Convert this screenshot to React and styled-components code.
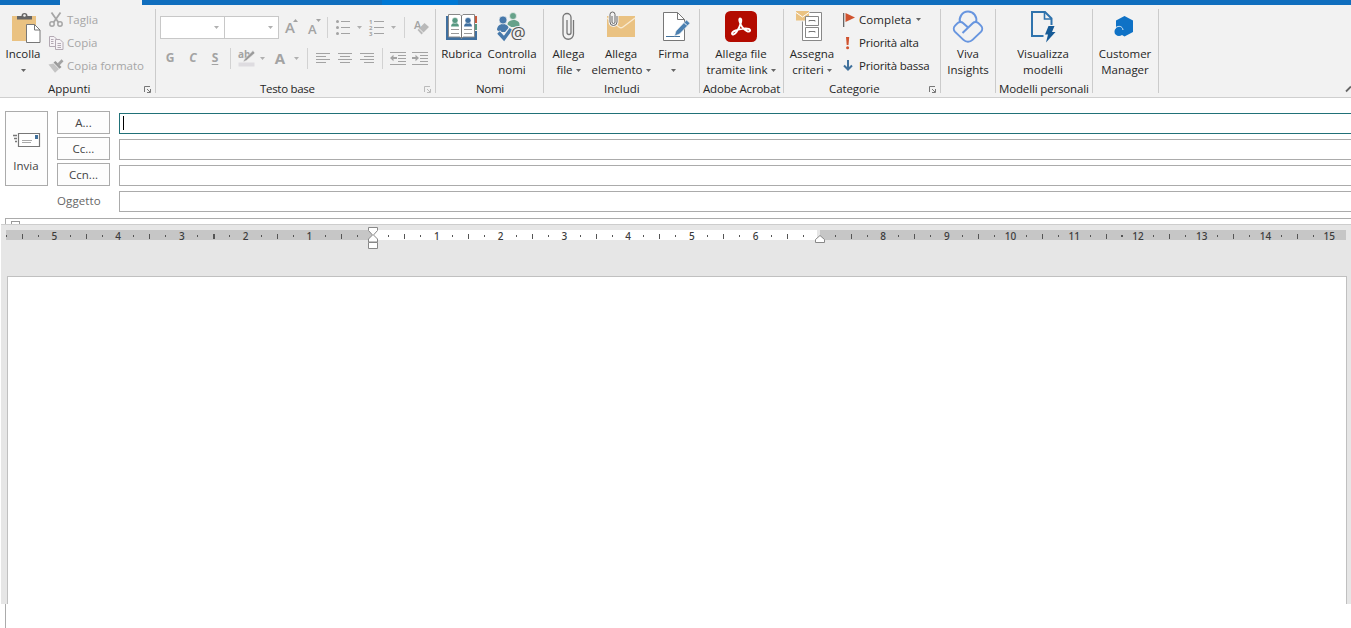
import React from 'react';
import styled, { createGlobalStyle } from "styled-components";

const GlobalStyle = createGlobalStyle`
  * { box-sizing: border-box; }
  body {
    margin: 0;
    background: #fff;
    overflow: hidden;
    font-family: "Open Sans", "Noto Sans", sans-serif;
    font-size: 11.5px;
    color: #262626;
  }
  svg { display: block; overflow: visible; flex: none; }
  button { font: inherit; color: inherit; padding: 0; }
`;

const Window = styled.div`
  width: 100%;
  height: 628px;
  display: flex;
  flex-direction: column;
  overflow: hidden;
`;
const TabStrip = styled.div`
  height: 5px;
  flex: none;
  display: flex;
  background: #106ebe;
`;
const ActiveTab = styled.div`
  width: 82px;
  margin-left: 60px;
  background: #f2f2f2;
`;
const StripAccent = styled.div`
  width: 76px;
  margin-left: 240px;
  background: #0078d4;
`;

const Ribbon = styled.div`
  height: 93px;
  flex: none;
  display: flex;
  background: #f2f2f2;
  border-bottom: 1px solid #cfcfcf;
`;
const Group = styled.section`
  width: ${(p) => p.$w}px;
  flex: none;
  display: flex;
  flex-direction: column;
  padding-top: 4px;
`;
const Separator = styled.div`
  width: 1px;
  height: 84px;
  margin-top: 4px;
  flex: none;
  background: #cbcbcb;
`;
const GroupBody = styled.div`
  height: 72px;
  display: flex;
  padding-left: ${(p) => p.$pad || 0}px;
`;
const GroupTitle = styled.div`
  height: 16px;
  line-height: 16px;
  display: flex;
  align-items: center;
  white-space: nowrap;
  padding: 0 4px 0 ${(p) => p.$pad}px;
  letter-spacing: ${(p) => p.$ls || 0}px;
  svg { margin-left: auto; }
`;
const Large = styled.button`
  width: ${(p) => p.$w}px;
  flex: none;
  border: none;
  background: none;
  display: flex;
  flex-direction: column;
  align-items: center;
  padding-top: 2px;
  svg.icon { margin-bottom: 3px; }
`;
const Line = styled.span`
  height: 16px;
  line-height: 16px;
  display: flex;
  align-items: center;
  justify-content: center;
  gap: 3px;
  white-space: nowrap;
`;
const SmallList = styled.div`
  display: flex;
  flex-direction: column;
  margin-top: -1px;
  padding-left: ${(p) => p.$pad}px;
  color: ${(p) => (p.$off ? "#a6a6a6" : "inherit")};
`;
const Small = styled.button`
  height: 23px;
  border: none;
  background: none;
  display: flex;
  align-items: center;
  gap: 4px;
  white-space: nowrap;
  letter-spacing: ${(p) => p.$ls || 0}px;
`;

const Tools = styled.div`
  display: flex;
  flex-direction: column;
  padding-top: 7px;
  color: #a3a3a3;
`;
const ToolRow = styled.div`
  display: flex;
  align-items: center;
  height: ${(p) => p.$h}px;
`;
const Tool = styled.div`
  width: ${(p) => p.$w}px;
  margin-left: ${(p) => p.$ml || 0}px;
  flex: none;
  display: flex;
  justify-content: center;
`;
const Letter = styled(Tool)`
  font-weight: 700;
  font-size: ${(p) => p.$size || 12}px;
  line-height: 16px;
  padding-bottom: 2px;
  font-style: ${(p) => (p.$italic ? "italic" : "normal")};
  text-decoration: ${(p) => (p.$under ? "underline" : "none")};
  text-underline-offset: 2px;
`;
const ToolSep = styled.div`
  width: 1px;
  height: 21px;
  margin-left: ${(p) => p.$ml}px;
  background: #d2d2d2;
`;
const Combo = styled.div`
  width: ${(p) => p.$w}px;
  height: 23px;
  margin-right: -1px;
  border: 1px solid #c8c8c8;
  background: #fff;
  display: flex;
  align-items: center;
  justify-content: flex-end;
  padding-right: 5px;
`;

const Header = styled.div`
  height: 120px;
  flex: none;
  display: flex;
  padding: 13px 0 0 5px;
  color: #444;
`;
const SendButton = styled.button`
  width: 43px;
  height: 75px;
  border: 1px solid #ababab;
  background: #fdfdfd;
  display: flex;
  flex-direction: column;
  align-items: center;
  padding: 21px 1px 0 0;
  gap: 11px;
`;
const Labels = styled.div`
  width: 53px;
  margin-left: 9px;
  display: flex;
  flex-direction: column;
  gap: 3px;
`;
const LabelButton = styled.button`
  height: 23px;
  border: 1px solid #ababab;
  background: #fdfdfd;
`;
const Subject = styled.span`
  line-height: 23px;
  color: #666;
  letter-spacing: 0.1px;
`;
const Fields = styled.div`
  flex: 1;
  margin-left: 9px;
  margin-right: -2px;
  padding-top: 2px;
  display: flex;
  flex-direction: column;
  gap: 5px;
`;
const Field = styled.div`
  height: 21px;
  border: 1px solid ${(p) => (p.$focus ? "#217178" : "#ababab")};
  background: #fff;
  padding: 2px 3px;
`;
const Caret = styled.div`
  width: 1px;
  height: 14px;
  background: #000;
`;
const Attachments = styled.div`
  height: 6px;
  flex: none;
  margin-left: 5px;
  border: solid #ababab;
  border-width: 1px 0 0 1px;
  padding: 2px 0 0 5px;
`;
const Handle = styled.div`
  width: 9px;
  height: 3px;
  border: 1px solid #999;
  border-bottom: none;
`;

const Editor = styled.div`
  height: 380px;
  flex: none;
  margin-left: 1px;
  background: #e6e6e6;
  border-top: 1px solid #cdcdcd;
  padding: 5px 4px 0 5px;
  display: flex;
  flex-direction: column;
`;
const Ruler = styled.div`
  position: relative;
  height: 10px;
  width: 1340px;
  flex: none;
  background: linear-gradient(to right, #c6c6c6 367px, #fff 367px 811px, #e6e6e6 811px 814px, #c6c6c6 814px);
`;
const Marks = styled.div`
  display: flex;
  height: 12px;
  margin-left: -7.5px;
`;
const Mark = styled.div`
  width: 15.9375px;
  height: 12px;
  flex: none;
  display: flex;
  align-items: center;
  justify-content: center;
  font-family: "Noto Sans", "Open Sans", sans-serif;
  font-size: 10px;
  font-weight: 500;
  line-height: 12px;
  color: #3c3c3c;
`;
const Tick = styled.i`
  width: ${(p) => (p.$bold ? 2 : 1)}px;
  height: ${(p) => (p.$tall ? 5 : 2)}px;
  background: #555;
`;
const Marker = styled.svg`
  position: absolute;
  left: ${(p) => p.$x}px;
  top: ${(p) => p.$y}px;
`;
const Page = styled.div`
  flex: 1;
  width: 1340px;
  margin: 36px 0 0 1px;
  border: 1px solid #c0c0c0;
  border-bottom: none;
  background: #fff;
`;
const Footer = styled.div`
  flex: 1;
  margin-left: 5px;
  border-left: 1px solid #ababab;
`;
const Collapse = styled.svg`
  margin: 81px 0 0 auto;
`;

const Arrow = ({ color = "#666" }) => (
  <svg width="5" height="3"><path d="M0 0h5L2.500 3z" fill={color} /></svg>
);
const Launcher = ({ color = "#777" }) => (
  <svg width="7" height="7" fill="none" stroke={color}>
    <path d="M.5 6V.5H6M3 3l3 3M6.500 3v3.500H3" />
  </svg>
);
const Icon = ({ children }) => (
  <svg className="icon" width="32" height="32" fill="none">{children}</svg>
);

const PasteIcon = () => (
  <Icon>
    <path d="M5 5h24v25H5z" fill="#eac282" />
    <path d="M10 8.500V5h4.500a3 3 0 0 1 6 0H25v3.500z" fill="#666" />
    <circle cx="17.500" cy="4.500" r="1.300" fill="#f2f2f2" />
    <path d="M19.500 13.500h8l5.500 5.500v12.500H19.500z" fill="#fff" stroke="#777" />
    <path d="M27.500 13.500V19H33" stroke="#777" />
  </Icon>
);
const ScissorsIcon = () => (
  <svg width="14" height="15" fill="none" stroke="#a6a6a6" strokeWidth="1.500">
    <path d="M2.500.5l7 10M11.500.5l-7 10" strokeWidth="1.800" />
    <circle cx="3" cy="12" r="2.200" /><circle cx="11" cy="12" r="2.200" />
  </svg>
);
const CopyIcon = () => (
  <svg width="14" height="14" fill="#f5f2f5" stroke="#b3a9b3">
    <path d="M.5.5H5L7.500 3v7.500h-7z" />
    <path d="M6.500 3.500H11L14 6.500v7H6.500z" />
    <path d="M2 3.500h2.500M2 5.500h2.500M2 7.500h2.500M8.500 7.500H12M8.500 9.500H12M8.500 11.500H12" />
  </svg>
);
const BrushIcon = () => (
  <svg width="14" height="14">
    <path d="M-.5 5.500l5-1 5.500 5.500-4 3.800z" fill="#c4c4c4" />
    <path d="M4.500 3.500l2-1.500 6 6-2 1.800z" fill="#999" />
    <path d="M8 5L12.500.2l2 2L10 7z" fill="#a3a3a3" />
  </svg>
);
const SizedA = ({ up }) => (
  <svg width="14" height="18" fill="#a3a3a3">
    <text x="0" y={up ? 14 : 15} fontSize={up ? 15 : 13} fontWeight="600">A</text>
    <path d={up ? "M8 3h5L10.500 0z" : "M8 0h5l-2.500 3z"} />
  </svg>
);
const BulletsIcon = () => (
  <svg width="14" height="15" fill="#a3a3a3">
    <circle cx="1.500" cy="1.500" r="1.500" /><circle cx="1.500" cy="7.500" r="1.500" /><circle cx="1.500" cy="13.500" r="1.500" />
    <path d="M5 1h9v1H5zM5 7h9v1H5zM5 13h9v1H5z" />
  </svg>
);
const NumbersIcon = () => (
  <svg width="15" height="15" fill="#a3a3a3" fontSize="6" fontWeight="700">
    <text x="0" y="4">1</text><text x="0" y="10">2</text><text x="0" y="16">3</text>
    <path d="M5 1h10v1H5zM5 7h10v1H5zM5 13h10v1H5z" />
  </svg>
);
const ClearIcon = () => (
  <svg width="15" height="16">
    <text x="0" y="9" fontSize="11" fontWeight="600" fill="#a3a3a3">A</text>
    <path d="M10.500 3l4.500 4-7.500 7.500L3.500 10z" fill="#b9b9b9" />
    <path d="M5 8.500l4.500 4.500" stroke="#f2f2f2" />
  </svg>
);
const HighlightIcon = () => (
  <svg width="17" height="17">
    <text x="0" y="8" fontSize="10" fontWeight="700" fill="#a3a3a3">ab</text>
    <path d="M15 .5L6.500 9 5 12 8.500 10.500 17 3z" fill="#9b9b9b" stroke="#f2f2f2" strokeWidth=".6" />
    <path d="M.5 12.500h16v4H.5z" fill="#dedce0" />
  </svg>
);
const AlignIcon = ({ side }) => {
  const x = { left: 0, center: 2, right: 4 }[side];
  return (
    <svg width="14" height="11" fill="#a3a3a3">
      <path d={`M0 0h14v1H0zM${x} 3h10v1H${x}zM0 6h14v1H0zM${x} 9h10v1H${x}z`} />
    </svg>
  );
};
const IndentIcon = ({ out }) => (
  <svg width="16" height="13" fill="#a3a3a3">
    <path d="M0 0h16v1H0zM8 3h8v1H8zM8 6h8v1H8zM8 9h8v1H8zM0 12h16v1H0z" />
    <path d={out ? "M0 6l3.500-3.200v2.200H7v2H3.500v2.200z" : "M7 6L3.500 2.800v2.200H0v2h3.500v2.200z"} />
  </svg>
);
const BookIcon = () => (
  <Icon>
    <path d="M0 5h31v24H0z" fill="#3f6f9f" />
    <path d="M28 5h3v7h-3z" fill="#c9583a" /><path d="M28 13h3v6h-3z" fill="#579982" />
    <path d="M28 12h3v1h-3zM28 19h3v1h-3z" fill="#f2f2f2" />
    <path d="M2.500 3.500H14L15.500 5 17 3.500h11.500v22.500H17l-1.500 1.500L14 26H2.500z" fill="#fff" stroke="#888" />
    <path d="M15.500 5v22" stroke="#777" />
    <path d="M5 15.500c0-5 8-5 8 0z" fill="#579982" /><circle cx="9" cy="9.500" r="3" fill="#579982" stroke="#fff" strokeWidth=".5" />
    <path d="M18 15.500c0-5 8-5 8 0z" fill="#3f6f9f" /><circle cx="22" cy="9.500" r="3" fill="#3f6f9f" stroke="#fff" strokeWidth=".5" />
    <path d="M5 18.500h8M5 22.500h8M18 18.500h8M18 22.500h8" stroke="#999" />
  </Icon>
);
const CheckNamesIcon = () => (
  <Icon>
    <path d="M11.500 13.500c0-6 12-6 12 0V16H15z" fill="#67a28a" />
    <circle cx="17" cy="5" r="3.500" fill="#67a28a" stroke="#f2f2f2" strokeWidth=".7" />
    <path d="M1 19c0-8 12-8 12 0l-3 2H4z" fill="#4779ab" />
    <circle cx="7" cy="9" r="4" fill="#4779ab" stroke="#f2f2f2" strokeWidth=".7" />
    <path d="M2 21l5.500 6L16 17" stroke="#f2f2f2" strokeWidth="5.500" />
    <path d="M2.500 21.500l5.500 6L15 18" stroke="#4779ab" strokeWidth="3.400" />
    <text x="14.500" y="28" fontSize="17" fill="#555" stroke="#f2f2f2" strokeWidth="2" paintOrder="stroke">@</text>
  </Icon>
);
const AttachIcon = () => (
  <Icon>
    <path d="M14 9v12.500a2 2 0 0 0 4 0V6.500a4 4 0 0 0-8 0V23a5 5 0 0 0 10.500 0V9" stroke="#777" strokeWidth="1.300" />
  </Icon>
);
const ItemIcon = () => (
  <Icon>
    <path d="M2 5h28v21H2z" fill="#eac282" />
    <path d="M2 7l12 9q2 1.500 4 0L30 7" stroke="#f8ead0" strokeWidth="1.300" />
    <path d="M7 5v6a1.500 1.500 0 0 0 3 0V3.500a2.500 2.500 0 0 0-5 0V11a3.500 3.500 0 0 0 7 0V5" stroke="#f2f2f2" strokeWidth="3" />
    <path d="M7 5v6a1.500 1.500 0 0 0 3 0V3.500a2.500 2.500 0 0 0-5 0V11a3.500 3.500 0 0 0 7 0V5" stroke="#666" />
  </Icon>
);
const SignIcon = () => (
  <Icon>
    <path d="M5.500 1.500h14l7 7v21h-21z" fill="#fff" stroke="#777" />
    <path d="M19.500 1.500v7h7" stroke="#777" />
    <path d="M8 25.500h14" stroke="#41719c" />
    <path d="M16.500 25l1.500-5L28.500 9l3.500 3.200L21.500 23z" fill="#4b80b1" stroke="#f2f2f2" strokeWidth=".6" />
    <path d="M26 11.500l3 3" stroke="#fff" />
  </Icon>
);
const AcrobatIcon = () => (
  <Icon>
    <rect width="32" height="31" rx="5.500" fill="#b30b00" />
    <path d="M15 7.500c2.800 0 .8 7-3.500 13.500-1.700 2.500-4.500 3.500-4.500 1.500.2-2.200 6-4.300 11.500-4.900 4.500-.5 7.300.5 6.500 2.200-1.100 2-5.500-.6-8-4.100-2.400-3.500-3.500-8.200-2-8.200z" stroke="#fff" strokeWidth="1.900" />
  </Icon>
);
const PolicyIcon = () => (
  <Icon>
    <path d="M6.500 1.500h19v28h-19z" fill="#fff" stroke="#888" />
    <path d="M-.5 0h14v10.500h-14z" fill="#f2f2f2" />
    <path d="M0 0h13v9.500H0z" fill="#eac282" /><path d="M0 1.500L6.500 6 13 1.500" stroke="#fff" />
    <path d="M9.500 5.500h13v9h-13zM9.500 16.500h13v10h-13z" fill="#fff" stroke="#888" />
    <path d="M13 10.500v-1h6v1M13 21.500v-1h6v1" stroke="#777" />
  </Icon>
);
const FlagIcon = () => (
  <svg width="12" height="14"><path d="M0 0h1.300v14H0z" fill="#666" /><path d="M2.500 0L12 4.500 2.500 9z" fill="#d0532f" /></svg>
);
const HighIcon = () => (
  <svg width="12" height="14" fill="#d0532f"><path d="M3 1h3.200l-.7 8H3.700z" /><circle cx="4.600" cy="11.700" r="1.500" /></svg>
);
const LowIcon = () => (
  <svg width="12" height="14" fill="none" stroke="#41719c" strokeWidth="2"><path d="M5 1v9M1 6.500l4 4 4-4" /></svg>
);
const VivaIcon = () => (
  <Icon>
    <g stroke="#6795df" strokeWidth="2">
      <path d="M8.200 11.500a8.300 8.300 0 1 1 15.800-.2" />
      <path d="M15.500 16l-4.200-3.800a4.300 4.300 0 0 0-6 .2l-2.200 2.200a4.500 4.500 0 0 0 0 6.300l8.400 8a6.500 6.500 0 0 0 9 0l8.400-8a4.500 4.500 0 0 0 0-6.300l-2.200-2.200a4.300 4.300 0 0 0-6-.2l-10.200 9.800" />
    </g>
  </Icon>
);
const TemplateIcon = () => (
  <Icon>
    <path d="M16.500 25H5V1h13l6.500 6.500V14" stroke="#2f73ad" strokeWidth="2" />
    <path d="M17.500 1v7h7" stroke="#2f73ad" strokeWidth="1.600" />
    <path d="M21.500 15h6l-2.500 6h3.500l-9.500 10.500 2-8H18z" fill="#175b97" />
  </Icon>
);
const CustomerIcon = () => (
  <Icon>
    <path d="M15.500 5l8.500 4.500v11.500L15.500 25.500 13 24c-3 2-7.500.5-7.500-3 0-2 .6-3 1.500-3.500V9.500z" fill="#0f72c6" />
    <path d="M7 16.500c2.500-2 6.500-1.500 7 2.500" stroke="#d8e8f5" />
  </Icon>
);
const SendIcon = () => (
  <svg width="27" height="14" fill="none" stroke="#777">
    <path d="M5.500.5h21v13h-21z" fill="#fff" strokeWidth="1.200" />
    <path d="M0 2.500h4M1 5.500h3M2 8.500h2" strokeWidth="1.300" />
    <path d="M9 7.500h10M9 9.500h9" stroke="#aaa" />
    <path d="M22 2h3v4h-3z" fill="#41719c" stroke="none" />
  </svg>
);

const LargeButton = ({ icon, w, lines, arrow }) => (
  <Large $w={w}>
    {icon}
    {lines.map((text, i) => (
      <Line key={i}>
        {text}
        {arrow && i === lines.length - 1 && <Arrow />}
      </Line>
    ))}
  </Large>
);

// quarter marks, from -5.75 up to 15
const marks = Array.from({ length: 84 }, (_, i) => (i - 23) / 4);

const RulerMark = ({ value }) => {
  if (value === 0 || value === 7) return <Mark />;
  if (Number.isInteger(value)) return <Mark>{Math.abs(value)}</Mark>;
  return (
    <Mark>
      <Tick $tall={Math.abs(value % 1) === 0.5} $bold={value === -2.5 || value === 11.75} />
    </Mark>
  );
};

const App = () => {
  const pale = "#b0b0b0";
  return (
    <Window>
      <GlobalStyle />
      <TabStrip><ActiveTab /><StripAccent /></TabStrip>
      <Ribbon>
        <Group $w={155}>
          <GroupBody>
            <LargeButton icon={<PasteIcon />} w={46} lines={["Incolla", ""]} arrow />
            <SmallList $pad={3} $off>
              <Small><ScissorsIcon />Taglia</Small>
              <Small><CopyIcon />Copia</Small>
              <Small><BrushIcon />Copia formato</Small>
            </SmallList>
          </GroupBody>
          <GroupTitle $pad={48}>Appunti<Launcher /></GroupTitle>
        </Group>
        <Separator />
        <Group $w={279}>
          <GroupBody $pad={4}>
            <Tools>
              <ToolRow $h={23}>
                <Combo $w={65}><Arrow color={pale} /></Combo>
                <Combo $w={55}><Arrow color={pale} /></Combo>
                <Tool $w={14} $ml={7}><SizedA up /></Tool>
                <Tool $w={14} $ml={9}><SizedA /></Tool>
                <ToolSep $ml={5} />
                <Tool $w={14} $ml={8}><BulletsIcon /></Tool>
                <Tool $w={5} $ml={7}><Arrow color={pale} /></Tool>
                <Tool $w={15} $ml={7}><NumbersIcon /></Tool>
                <Tool $w={5} $ml={7}><Arrow color={pale} /></Tool>
                <ToolSep $ml={8} />
                <Tool $w={15} $ml={9}><ClearIcon /></Tool>
              </ToolRow>
              <ToolRow $h={39}>
                <Letter $w={12} $ml={4}>G</Letter>
                <Letter $w={12} $ml={11} $italic>C</Letter>
                <Letter $w={12} $ml={10} $under>S</Letter>
                <ToolSep $ml={9} />
                <Tool $w={17} $ml={7}><HighlightIcon /></Tool>
                <Tool $w={5} $ml={5}><Arrow color={pale} /></Tool>
                <Letter $w={12} $ml={9} $size={15}>A</Letter>
                <Tool $w={5} $ml={8}><Arrow color={pale} /></Tool>
                <ToolSep $ml={8} />
                <Tool $w={14} $ml={8}><AlignIcon side="left" /></Tool>
                <Tool $w={14} $ml={8}><AlignIcon side="center" /></Tool>
                <Tool $w={14} $ml={8}><AlignIcon side="right" /></Tool>
                <ToolSep $ml={8} />
                <Tool $w={16} $ml={7}><IndentIcon out /></Tool>
                <Tool $w={16} $ml={6}><IndentIcon /></Tool>
              </ToolRow>
            </Tools>
          </GroupBody>
          <GroupTitle $pad={104} $ls={-0.3}>Testo base<Launcher color="#bbb" /></GroupTitle>
        </Group>
        <Separator />
        <Group $w={107}>
          <GroupBody>
            <LargeButton icon={<BookIcon />} w={51} lines={["Rubrica"]} />
            <LargeButton icon={<CheckNamesIcon />} w={50} lines={["Controlla", "nomi"]} />
          </GroupBody>
          <GroupTitle $pad={40} $ls={-0.3}>Nomi</GroupTitle>
        </Group>
        <Separator />
        <Group $w={155}>
          <GroupBody $pad={5}>
            <LargeButton icon={<AttachIcon />} w={39} lines={["Allega", "file"]} arrow />
            <LargeButton icon={<ItemIcon />} w={66} lines={["Allega", "elemento"]} arrow />
            <LargeButton icon={<SignIcon />} w={39} lines={["Firma", ""]} arrow />
          </GroupBody>
          <GroupTitle $pad={60}>Includi</GroupTitle>
        </Group>
        <Separator />
        <Group $w={83}>
          <GroupBody>
            <LargeButton icon={<AcrobatIcon />} w={82} lines={["Allega file", "tramite link"]} arrow />
          </GroupBody>
          <GroupTitle $pad={3} $ls={-0.2}>Adobe Acrobat</GroupTitle>
        </Group>
        <Separator />
        <Group $w={156}>
          <GroupBody $pad={4}>
            <LargeButton icon={<PolicyIcon />} w={48} lines={["Assegna", "criteri"]} arrow />
            <SmallList $pad={7}>
              <Small $ls={0.1}><FlagIcon />Completa<Arrow /></Small>
              <Small $ls={-0.2}><HighIcon />Priorità alta</Small>
              <Small $ls={-0.2}><LowIcon />Priorità bassa</Small>
            </SmallList>
          </GroupBody>
          <GroupTitle $pad={45} $ls={-0.1}>Categorie<Launcher /></GroupTitle>
        </Group>
        <Separator />
        <Group $w={54}>
          <GroupBody>
            <LargeButton icon={<VivaIcon />} w={54} lines={["Viva", "Insights"]} />
          </GroupBody>
        </Group>
        <Separator />
        <Group $w={96}>
          <GroupBody>
            <LargeButton icon={<TemplateIcon />} w={94} lines={["Visualizza", "modelli"]} />
          </GroupBody>
          <GroupTitle $pad={3} $ls={-0.15}>Modelli personali</GroupTitle>
        </Group>
        <Separator />
        <Group $w={65}>
          <GroupBody>
            <LargeButton icon={<CustomerIcon />} w={64} lines={["Customer", "Manager"]} />
          </GroupBody>
        </Group>
        <Separator />
        <Collapse width="5" height="6"><path d="M0 5.500L5 .5" stroke="#666" strokeWidth="1.800" /></Collapse>
      </Ribbon>

      <Header>
        <SendButton><SendIcon />Invia</SendButton>
        <Labels>
          <LabelButton>A...</LabelButton>
          <LabelButton>Cc...</LabelButton>
          <LabelButton>Ccn...</LabelButton>
          <Subject>Oggetto</Subject>
        </Labels>
        <Fields>
          <Field $focus><Caret /></Field>
          <Field />
          <Field />
          <Field />
        </Fields>
      </Header>
      <Attachments><Handle /></Attachments>

      <Editor>
        <Ruler>
          <Marks>
            {marks.map((value) => <RulerMark key={value} value={value} />)}
          </Marks>
          <Marker $x={362} $y={-3} width="10" height="22" fill="#fff" stroke="#888">
            <path d="M.5.500h9v3L5.500 8l4 4v3h-9v-3l4-4-4-4.500z" />
            <path d="M.5 15.500h9v6h-9z" />
          </Marker>
          <Marker $x={809} $y={5} width="10" height="8" fill="#fff" stroke="#888">
            <path d="M.5 7.500v-3L5 .5l4.500 4v3z" />
          </Marker>
        </Ruler>
        <Page />
      </Editor>
      <Footer />
    </Window>
  );
};

export default App;
